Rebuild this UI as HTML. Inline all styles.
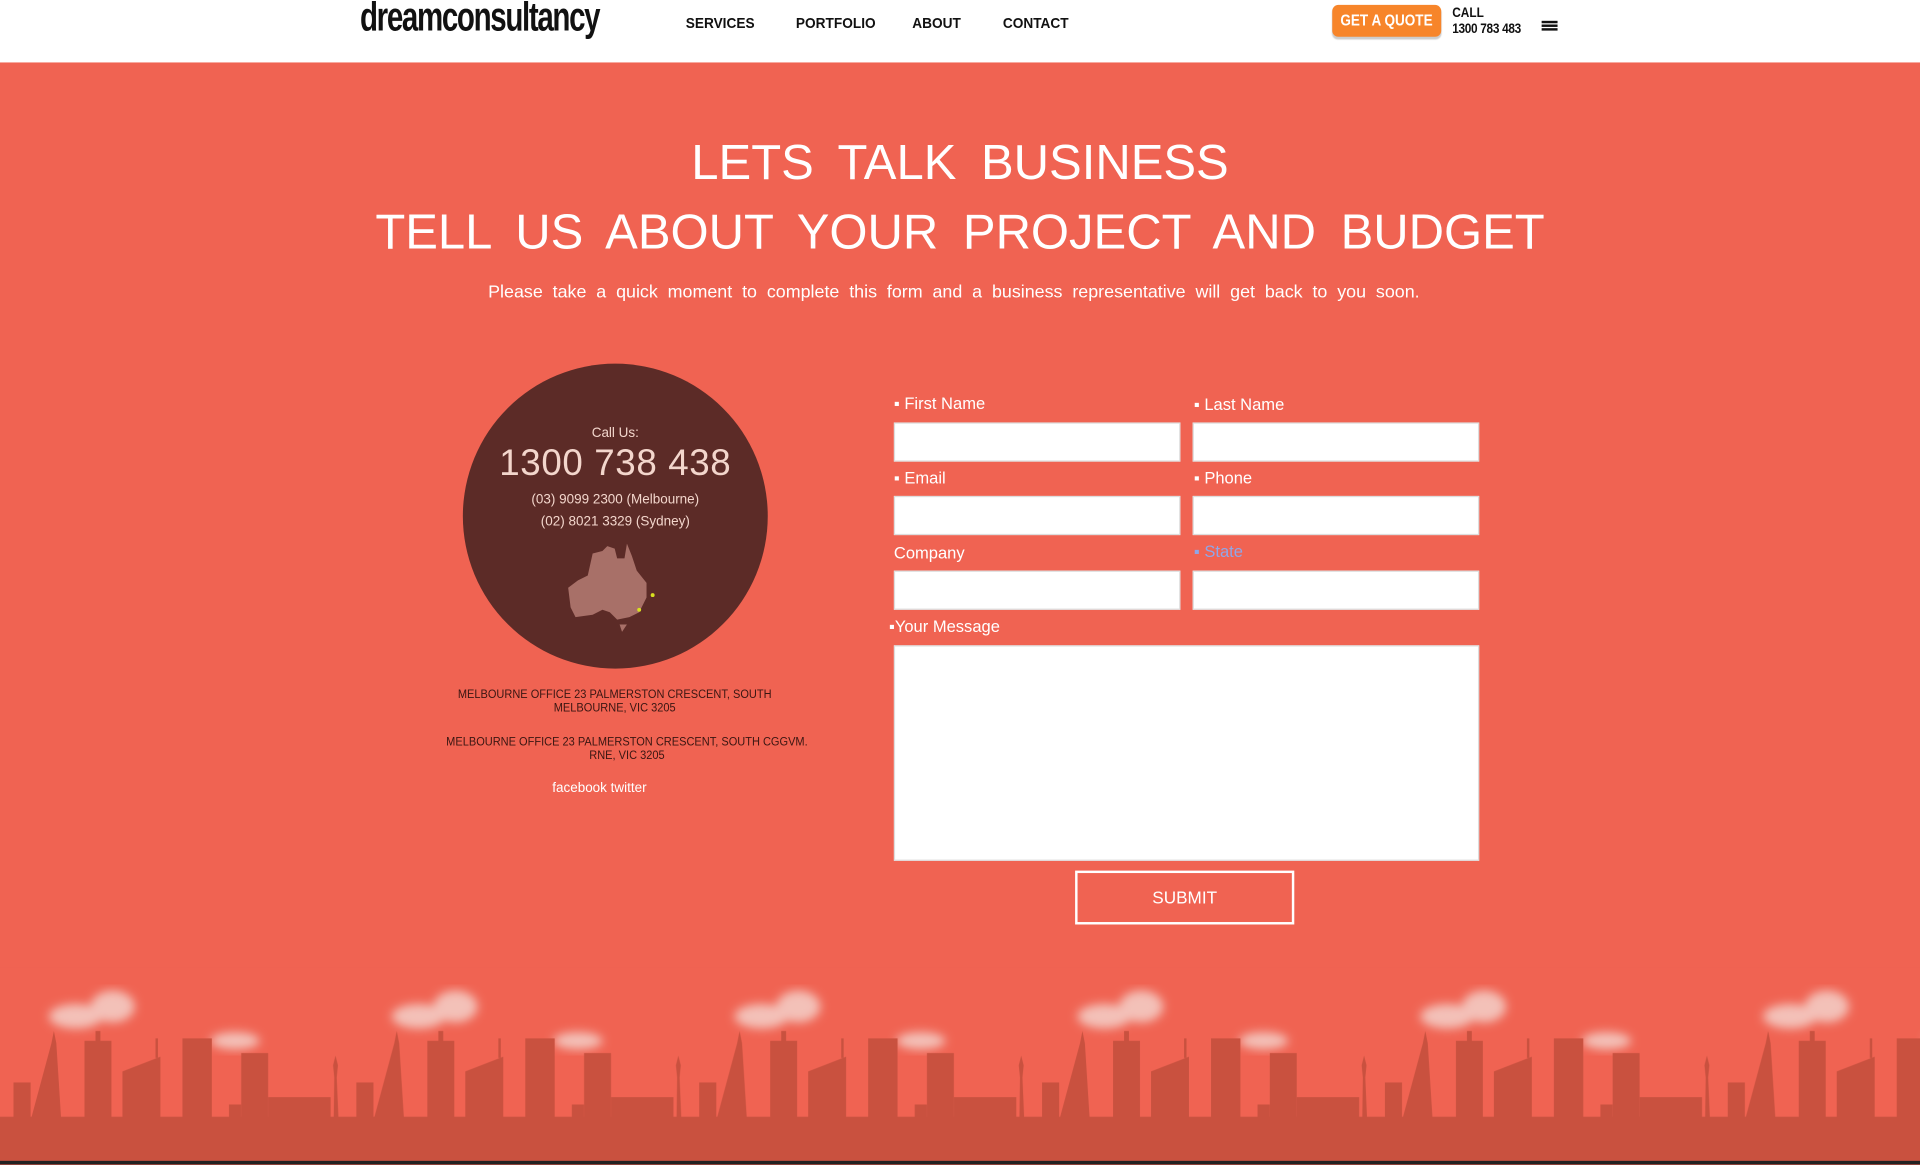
<!DOCTYPE html>
<html><head><meta charset="utf-8"><style>
html,body{margin:0;padding:0;width:1920px;height:1165px;overflow:hidden;background:#f06352;}
#w{position:absolute;left:0;top:0;width:1568px;height:951px;transform:scale(1.22449);transform-origin:0 0;background:#f06352;font-family:"Liberation Sans",sans-serif;}
.a{position:absolute;}
header{position:absolute;left:0;top:0;width:1568px;height:51px;background:#fff;}
.nav{font-size:12px;font-weight:bold;color:#111;top:12px;transform:scaleX(0.93);transform-origin:0 0;}
.h{color:#fff;text-align:center;width:1568px;left:0;font-size:40px;word-spacing:9px;}
.lbl{color:#fff;font-size:13.5px;}
.in{background:#fff;border:1px solid #ddd;box-sizing:border-box;height:32px;width:234px;}
</style></head><body><div id="w">
<header>
<div class="a" style="left:294px;top:-5px;font-size:33px;font-weight:bold;letter-spacing:-1.5px;transform:scaleX(0.73);transform-origin:0 0;color:#111">dreamconsultancy</div>
<div class="a nav" style="left:560px">SERVICES</div>
<div class="a nav" style="left:650px">PORTFOLIO</div>
<div class="a nav" style="left:745px">ABOUT</div>
<div class="a nav" style="left:819px">CONTACT</div>
<div class="a" style="left:1088px;top:4px;width:89px;height:26px;background:#f7852a;border-radius:5px;box-shadow:0 2px 1px #ccc;color:#fff;font-size:13px;font-weight:bold;line-height:26px;text-align:center;"><span style="display:inline-block;transform:scaleX(0.85)">GET A QUOTE</span></div>
<div class="a" style="left:1186px;top:5px;font-size:11px;font-weight:bold;line-height:13px;color:#111;transform:scaleX(0.88);transform-origin:0 0">CALL<br><span style="letter-spacing:-0.3px">1300 783 483</span></div>
<div class="a" style="left:1259px;top:17px;width:13px;height:2px;background:#111;box-shadow:0 3px 0 #111,0 6px 0 #111"></div>
</header>
<div class="a h" style="top:111px">LETS TALK BUSINESS</div>
<div class="a h" style="top:168px">TELL US ABOUT YOUR PROJECT AND BUDGET</div>
<div class="a" style="left:0;width:1558px;text-align:center;top:231px;color:#fff;font-size:14.6px;word-spacing:4px">Please take a quick moment to complete this form and a business representative will get back to you soon.</div>

<div class="a" style="left:378px;top:297px;width:249px;height:249px;border-radius:50%;background:#5c2b27;text-align:center;color:#f3d6cc;">
<div style="margin-top:51px;font-size:11px">Call Us:</div>
<div style="font-size:30px;margin-top:2px;letter-spacing:0.5px">1300 738 438</div>
<div style="font-size:11px;margin-top:6px">(03) 9099 2300 (Melbourne)</div>
<div style="font-size:11px;margin-top:6px">(02) 8021 3329 (Sydney)</div>
<svg width="80" height="72" viewBox="0 0 80 72" style="position:absolute;left:84px;top:147px"><path d="M22 8 L30 6 L34 2 L40 4 L42 12 L48 12 L50 0 L54 10 L58 22 L66 32 L66 44 L60 56 L52 60 L42 62 L36 56 L30 54 L22 58 L8 60 L4 52 L2 36 L10 30 L18 26 Z M44 66 L50 66 L46 72 Z" fill="#a87068"/><circle cx="71" cy="42" r="1.6" fill="#d8e020"/><circle cx="60" cy="54" r="1.6" fill="#d8e020"/></svg>
</div>
<div class="a" style="left:352px;width:300px;top:562px;text-align:center;font-size:10px;line-height:11px;color:#3a1612;transform:scaleX(0.9)">MELBOURNE OFFICE 23 PALMERSTON CRESCENT, SOUTH MELBOURNE, VIC 3205</div>
<div class="a" style="left:342px;width:340px;top:601px;text-align:center;font-size:10px;line-height:11px;color:#3a1612;transform:scaleX(0.9)">MELBOURNE OFFICE 23 PALMERSTON CRESCENT, SOUTH CGGVM. RNE, VIC 3205</div>
<div class="a" style="left:451px;top:638px;color:#fff;font-size:11px">facebook twitter</div>

<div class="a lbl" style="left:730px;top:322px">▪ First Name</div>
<div class="a lbl" style="left:975px;top:323px">▪ Last Name</div>
<div class="a in" style="left:730px;top:345px"></div>
<div class="a in" style="left:974px;top:345px"></div>
<div class="a lbl" style="left:730px;top:383px">▪ Email</div>
<div class="a lbl" style="left:975px;top:383px">▪ Phone</div>
<div class="a in" style="left:730px;top:405px"></div>
<div class="a in" style="left:974px;top:405px"></div>
<div class="a lbl" style="left:730px;top:444px">Company</div>
<div class="a lbl" style="left:975px;top:443px;color:#8fa6e8">▪ State</div>
<div class="a in" style="left:730px;top:466px"></div>
<div class="a in" style="left:974px;top:466px"></div>
<div class="a lbl" style="left:726px;top:504px">▪Your Message</div>
<div class="a in" style="left:730px;top:527px;width:478px;height:176px"></div>
<div class="a" style="left:878px;top:711px;width:179px;height:44px;box-sizing:border-box;border:2px solid #fff;color:#fff;font-size:14px;text-align:center;line-height:40px">SUBMIT</div>

<svg class="a" style="left:0;top:790px" width="1568" height="161" viewBox="0 0 1568 161">
<defs>
<filter id="bl"><feGaussianBlur stdDeviation="4"/></filter>
<pattern id="sk" x="0" y="0" width="280" height="161" patternUnits="userSpaceOnUse">
<g fill="#f4e0da" opacity="0.75" filter="url(#bl)"><ellipse cx="62" cy="40" rx="22" ry="10"/><ellipse cx="92" cy="32" rx="18" ry="13"/><ellipse cx="192" cy="60" rx="20" ry="7"/></g>
<g fill="#c9513f">
<rect x="11" y="94" width="14" height="70"/>
<path d="M25 125 L42 62 L44 52 L46 62 L50 125 Z"/>
<rect x="69" y="60" width="22" height="100"/><rect x="78" y="52" width="4" height="10"/>
<path d="M100 85 L131 73 L131 160 L100 160 Z"/><rect x="127" y="58" width="2" height="16"/>
<rect x="149" y="58" width="24" height="100"/>
<rect x="197" y="70" width="22" height="90"/>
<rect x="219" y="106" width="51" height="60"/><rect x="187" y="112" width="10" height="50"/>
<path d="M272 160 L273 90 L272 80 L274 72 L276 80 L275 90 L278 160 Z"/>
<rect x="0" y="122" width="280" height="39"/>
</g>
</pattern>
</defs>
<rect width="1568" height="158" fill="url(#sk)"/>
<rect y="158" width="1568" height="3" fill="#222"/>
</svg>
</div></body></html>
